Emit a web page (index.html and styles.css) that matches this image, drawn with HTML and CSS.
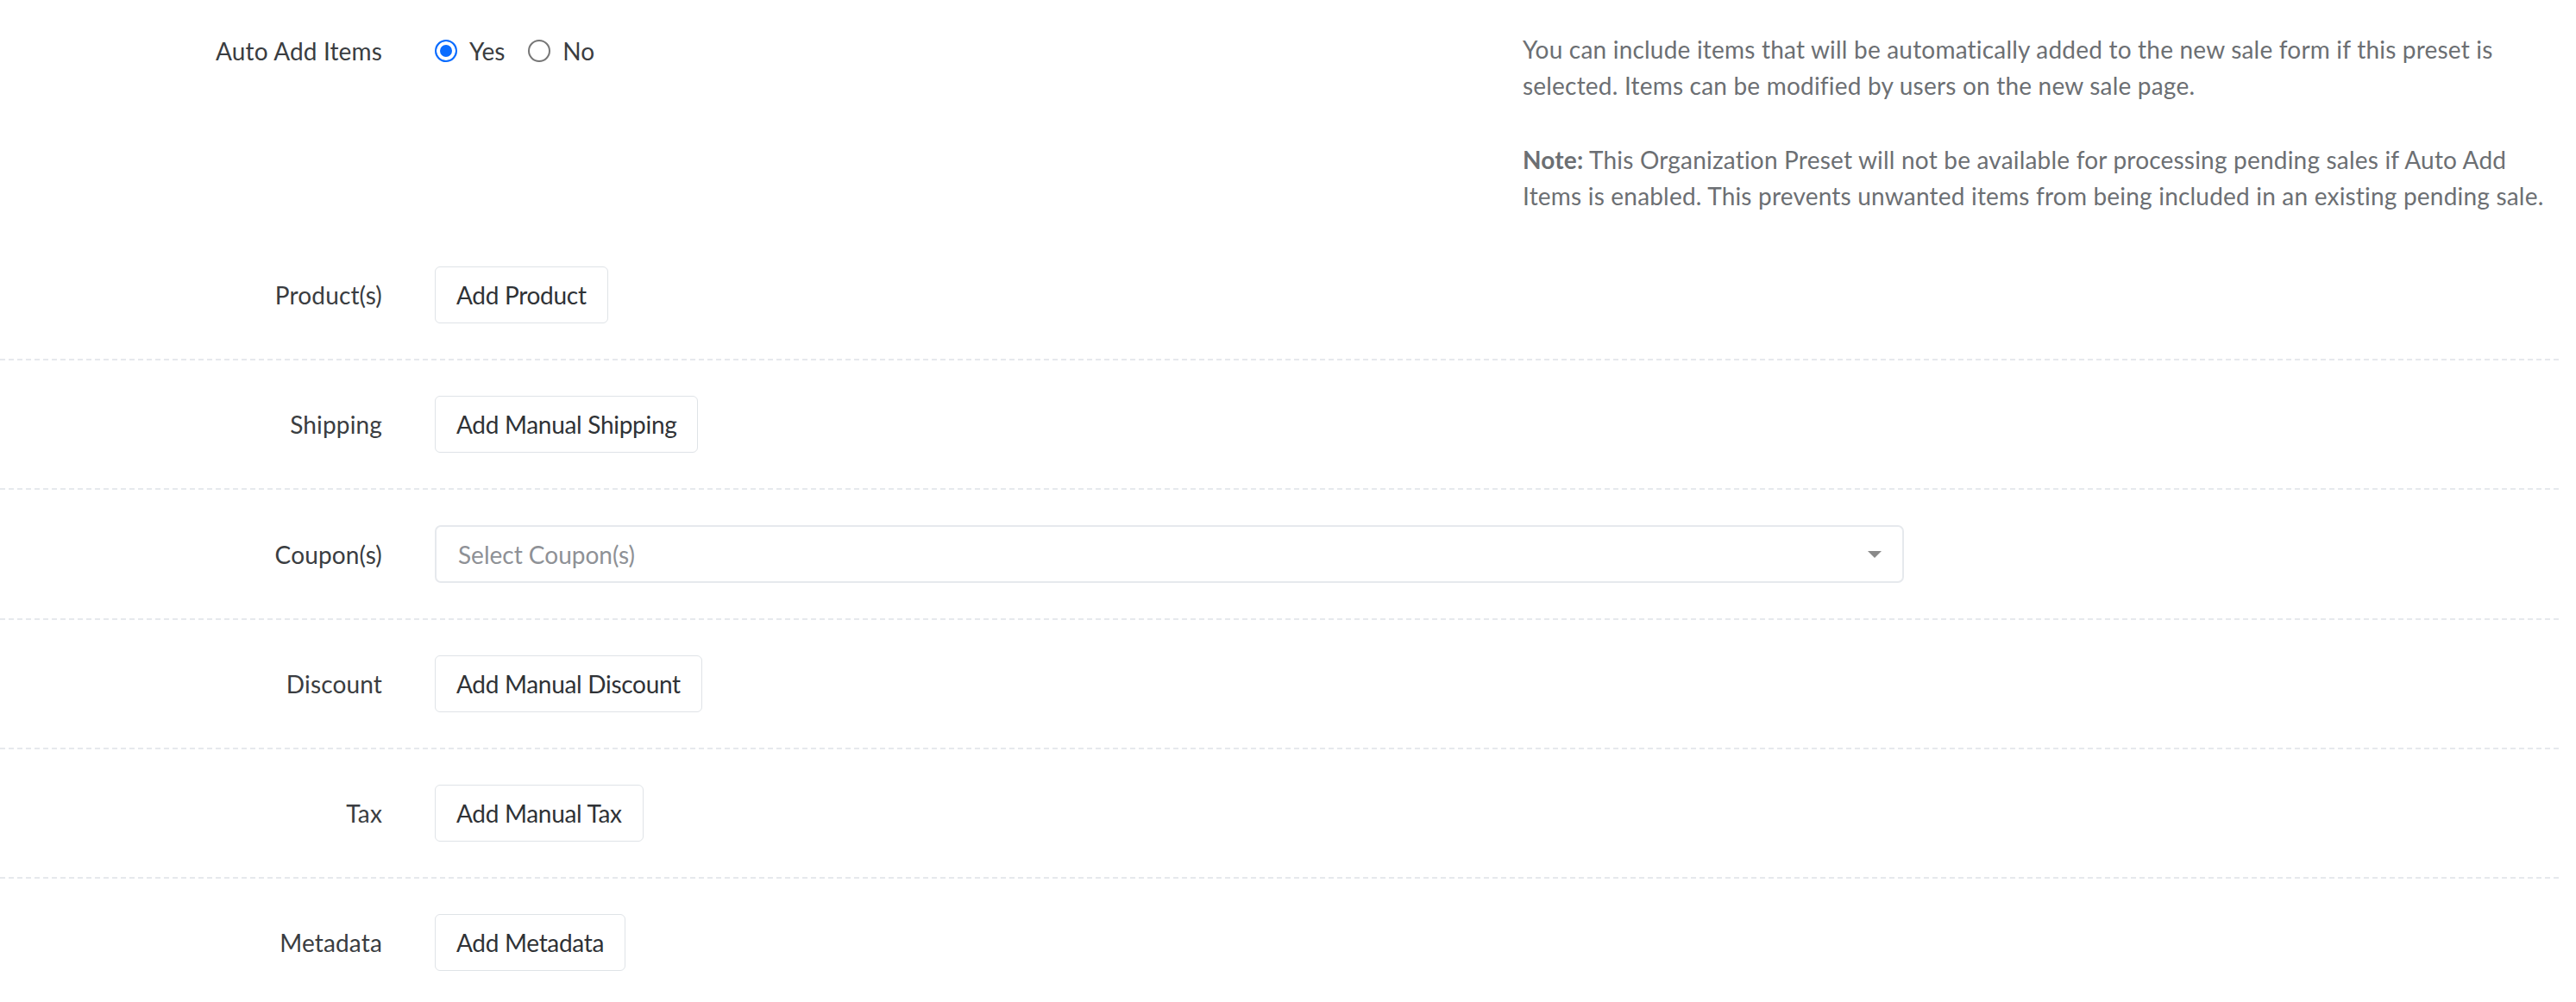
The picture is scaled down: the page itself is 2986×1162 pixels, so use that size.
FILE: index.html
```html
<!DOCTYPE html>
<html lang="en">
<head>
  <meta charset="UTF-8">
  <meta name="viewport" content="width=device-width, initial-scale=1.0">
  <title>Organization Preset - Items</title>
  <link rel="stylesheet" href="styles.css">
</head>
<body>
  <form class="preset-form">
    <div class="form-row intro-row">
      <label class="row-label">Auto Add Items</label>
      <div class="radio-group">
        <label class="radio-option"><input type="radio" name="auto-add" checked /> Yes</label>
        <label class="radio-option"><input type="radio" name="auto-add" /> No</label>
      </div>
      <div class="help-text">
        <p>You can include items that will be automatically added to the new sale form if this preset is selected. Items can be modified by users on the new sale page.</p>
        <p><strong>Note:</strong> This Organization Preset will not be available for processing pending sales if Auto Add<br>Items is enabled. This prevents unwanted items from being included in an existing pending sale.</p>
      </div>
    </div>

    <div class="form-row">
      <label class="row-label">Product(s)</label>
      <div><button type="button" class="add-btn">Add Product</button></div>
    </div>

    <div class="form-row">
      <label class="row-label">Shipping</label>
      <div><button type="button" class="add-btn">Add Manual Shipping</button></div>
    </div>

    <div class="form-row">
      <label class="row-label">Coupon(s)</label>
      <div class="select-box">
        <span class="placeholder">Select Coupon(s)</span>
        <span class="caret"></span>
      </div>
    </div>

    <div class="form-row">
      <label class="row-label">Discount</label>
      <div><button type="button" class="add-btn">Add Manual Discount</button></div>
    </div>

    <div class="form-row">
      <label class="row-label">Tax</label>
      <div><button type="button" class="add-btn">Add Manual Tax</button></div>
    </div>

    <div class="form-row">
      <label class="row-label">Metadata</label>
      <div><button type="button" class="add-btn">Add Metadata</button></div>
    </div>
  </form>
</body>
</html>
```

FILE: styles.css
```css
html {
  font-family: Lato, "Open Sans", sans-serif;
}

body {
  margin: 0;
  background: #fff;
  color: #3a3d41;
  font-size: 28px;
  line-height: 42px;
}

.preset-form {
  display: flex;
  flex-direction: column;
  padding-right: 20px;
}

.form-row {
  display: grid;
  grid-template-columns: 443px minmax(0, 1fr);
  column-gap: 61px;
  align-items: center;
  padding: 41px 0 41px;
  border-bottom: 2px dashed #e6e9ed;
}

.intro-row {
  grid-template-columns: 443px minmax(0, 1fr) 1201px;
  align-items: start;
  padding: 36px 0 20px;
  border-bottom: none;
}
.intro-row .row-label {
  padding-top: 2px;
}

.row-label {
  text-align: right;
  letter-spacing: 0.15px;
}

.radio-group {
  display: flex;
  gap: 27px;
  padding-top: 2px;
}
.radio-option {
  display: flex;
  align-items: center;
  gap: 14px;
}
.radio-option input {
  appearance: none;
  margin: 0;
  width: 26px;
  height: 26px;
  border: 2px solid #767676;
  border-radius: 50%;
  &:checked {
    border-color: #0a6cff;
    background: #0a6cff;
    box-shadow: inset 0 0 0 4px #fff;
  }
}

.help-text {
  color: #6c6f73;
  letter-spacing: 0.2px;
  p {
    margin: 0 0 44px;
  }
  p:last-child {
    margin-bottom: 0;
  }
  strong {
    font-weight: bold;
  }
}

.add-btn {
  font: inherit;
  letter-spacing: -0.3px;
  color: #2f3236;
  background: #fff;
  border: 1px solid #dfe3e7;
  border-radius: 6px;
  padding: 11px 24px;
  cursor: pointer;
}

.select-box {
  display: flex;
  align-items: center;
  justify-content: space-between;
  width: 1703px;
  box-sizing: border-box;
  height: 67px;
  padding: 0 24px 0 25px;
  border: 2px solid #e6e9ed;
  border-radius: 7px;
}
.placeholder {
  color: #8e9196;
}
.caret {
  width: 0;
  height: 0;
  border-left: 8px solid transparent;
  border-right: 8px solid transparent;
  border-top: 8px solid #8a8a8a;
}
```
